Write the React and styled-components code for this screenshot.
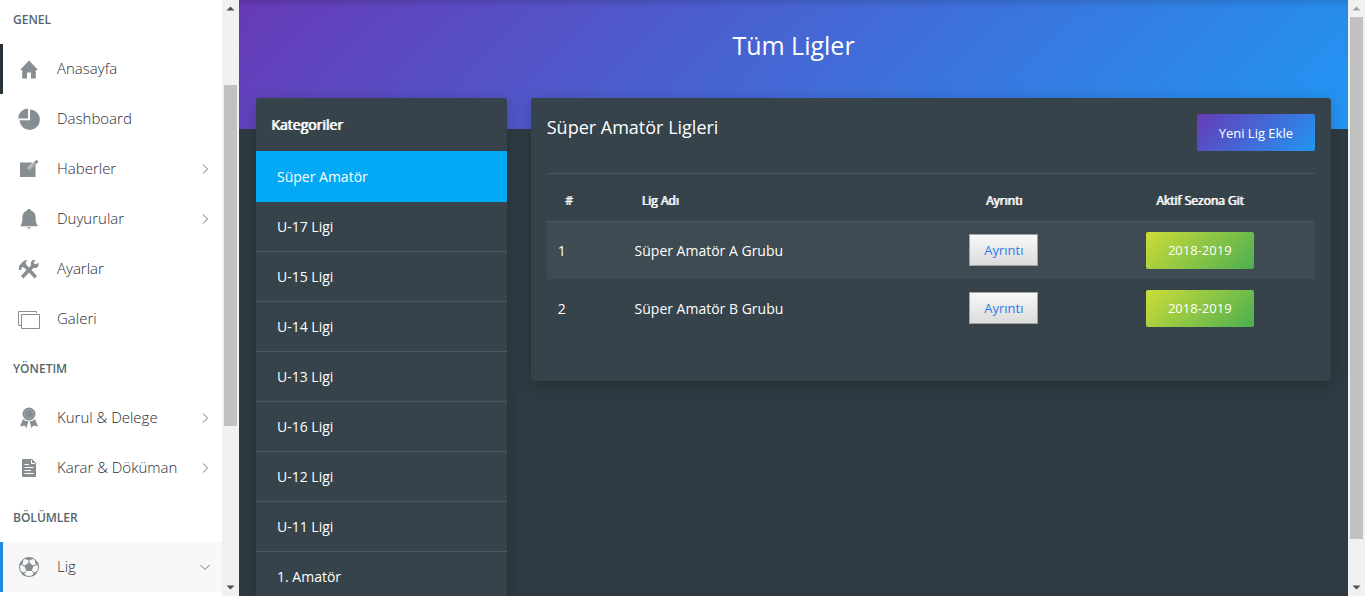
import styled, { createGlobalStyle } from 'styled-components';

const GlobalStyle = createGlobalStyle`
  * {
    box-sizing: border-box;
  }
  body {
    margin: 0;
    font-family: 'Open Sans', 'Noto Sans', sans-serif;
    font-size: 14px;
    color: #fff;
  }
`

const Page = styled.div`
  display: flex;
  height: 100vh;
  overflow: hidden;
`

const Sidebar = styled.nav`
  flex: 0 0 222px;
  overflow: hidden;
  background: #fff;
`

const Group = styled.section`
  &:first-child {
    margin-top: -5px;
  }
`

const GroupTitle = styled.h2`
  margin: 0;
  padding: 0 13px;
  font-size: 12px;
  font-weight: 600;
  line-height: 49px;
  color: #54666f;
`

const NavLink = styled.a`
  display: flex;
  align-items: center;
  height: 50px;
  padding: 0 12px 0 15px;
  border-left: 3px solid ${props => props.$bar || 'transparent'};
  background: ${props => (props.$open ? '#f8f8f8' : 'transparent')};
  color: #1f2d33;
  font-size: 15px;
  font-weight: 300;
  text-decoration: none;

  span {
    flex: 1;
    padding: 0 0 2px 17px;
  }
`

const NavIcon = styled.svg`
  width: 22px;
  height: 22px;
  fill: #868e92;
`

const Arrow = styled.svg`
  width: 10px;
  height: 10px;
  fill: none;
  stroke: #6b787e;
  transform: rotate(${props => (props.$open ? '90deg' : '0deg')});
`

const Scrollbar = styled.div`
  display: flex;
  flex: 0 0 17px;
  flex-direction: column;
  align-items: center;
  background: #f1f1f1;
`

const ScrollArrow = styled.svg`
  flex: 0 0 17px;
  width: 17px;
  fill: ${props => (props.$off ? '#a3a3a3' : '#505050')};
`

const Space = styled.div`
  flex: ${props => props.$size} 0 0;
`

const Thumb = styled(Space)`
  width: 13px;
  background: #c1c1c1;
`

const Main = styled.main`
  flex: 1;
  min-width: 0;
  overflow: hidden;
  padding: 0 17px;
  background: linear-gradient(135deg, #673ab7, #2196f3) top / 100% 129px no-repeat, #2f3b43;
  box-shadow: inset 0 6px 8px -5px rgba(0, 0, 0, 0.2);
`

const PageTitle = styled.h1`
  margin: 0;
  padding: 28px 0 36px;
  font-size: 25px;
  font-weight: 400;
  line-height: 34px;
  text-align: center;
`

const Columns = styled.div`
  display: grid;
  grid-template-columns: repeat(12, 1fr);
  align-items: start;
  gap: 24px;
`

const Card = styled.section`
  grid-column: span ${props => props.$span};
  border-radius: 3px;
  background: #36434b;
  box-shadow: 0 4px 16px rgba(0, 0, 0, 0.22);
`

const CardTitle = styled.h3`
  margin: 0;
  padding: 0 15px;
  font-size: 14px;
  font-weight: 400;
  line-height: 53px;
  text-shadow: 1px 0 currentColor;
`

const Category = styled.a`
  display: block;
  padding: 0 21px;
  border-bottom: 1px solid #4b575e;
  line-height: 49px;
  color: #fff;
  text-decoration: none;

  &[aria-current] {
    border-top: 1px solid #03a9f4;
    border-color: #03a9f4;
    background: #03a9f4;
  }
`

const Leagues = styled(Card)`
  padding: 16px 16px 44px;
`

const LeaguesHead = styled.header`
  display: flex;
  justify-content: space-between;
  align-items: flex-start;
  height: 60px;
  border-bottom: 1px solid #48555c;

  h2 {
    margin: 0;
    font-size: 18px;
    font-weight: 400;
    line-height: 27px;
  }
`

const Button = styled.button`
  height: 37px;
  padding: 0 22px;
  border: 0;
  border-radius: 2px;
  background: linear-gradient(135deg, ${props => props.$from}, ${props => props.$to});
  color: #fff;
  font: inherit;
  font-size: 13px;
  font-weight: 500;
`

const DetailButton = styled.button`
  height: 32px;
  padding: 0 14px;
  border: 1px solid #a3a3a3;
  background: linear-gradient(#f8f8f8, #dcdcdc);
  color: #2a7bea;
  font: inherit;
  font-size: 13px;
  vertical-align: middle;
`

const Table = styled.table`
  width: 100%;
  table-layout: fixed;
  border-collapse: collapse;

  th {
    height: 47px;
    padding: 6px 18px 0;
    border-bottom: 1px solid #4b575e;
    font-size: 12px;
    font-weight: 400;
    text-align: left;
    text-shadow: 1px 0 currentColor;
  }
  td {
    height: 58px;
    padding: 0 11px;
  }
  tbody tr:nth-child(odd) {
    background: #3e4b52;
  }
  th:nth-child(n + 3),
  td:nth-child(n + 3) {
    text-align: center;
  }
`

const icons = {
  home: <path d="M11 2.500 L20 12 H17.800 V20.500 H13 V14.500 H9 V20.500 H4.200 V12 H2 Z" />,
  pie: (
    <>
      <path d="M10 0.500 V10.500 H0.200 A10 10 0 0 1 10 0.500 Z" />
      <path d="M12 1.500 A10.200 10.200 0 1 1 1.500 12.300 H12 Z" />
    </>
  ),
  edit: (
    <>
      <path d="M2 4.500 H17.500 V19 H2 Z" />
      <path fill="none" stroke="#fff" strokeWidth="3.600" d="M20 1.500 L10.500 11.500" />
      <path d="M18.500 1.800 L20.500 3.800 L11.500 13 L8 14.500 L9.300 11 Z" />
      <path fill="none" stroke="#fff" strokeWidth="0.800" d="M17.500 4.800 L11 11.300" />
    </>
  ),
  bell: (
    <path d="M11 1 C12 1 12.800 1.600 12.900 2.600 C16 3.500 17.600 6 17.600 9.500 C17.600 13.500 18.200 15.500 19.500 17.500 V18.200 H2.500 V17.500 C3.800 15.500 4.400 13.500 4.400 9.500 C4.400 6 6 3.500 9.100 2.600 C9.200 1.600 10 1 11 1 Z M9 19.300 H13 A2.100 2.100 0 0 1 9 19.300 Z" />
  ),
  tools: (
    <path d="M1 12 L1 8 L4.500 4 Q7 1.500 9.500 2.500 L7.500 4.500 L8.500 7 L11 9.500 L13 7.500 Q12 3.500 15 2 L17.500 2 L15.500 4.500 L17 6.500 L20.500 5 Q21 9 18 10 L15.500 10 L13.500 12 L19 18 L16.500 20.500 L11 14.500 L5.500 20.500 L3 18 L8.500 12 L6 9.500 L4 9 L3 12 Z" />
  ),
  gallery: <path fill="none" stroke="#868e92" d="M18.500 5 V3.500 H0.500 V17.500 H3 M3.500 6.500 H21.500 V20.500 H3.500 Z" />,
  award: (
    <>
      <circle cx="11" cy="7" r="6.500" />
      <circle cx="11" cy="7" r="4.500" fill="none" stroke="#b0b5b8" strokeWidth="0.700" />
      <path d="M5 12 Q8 15 10.500 14 L8.500 21 L6.500 18.500 L2 19.500 Z M17 12 Q14 15 11.500 14 L13.500 21 L15.500 18.500 L20 19.500 Z" />
    </>
  ),
  document: (
    <>
      <path d="M4 2 H14 L18 6 V20 H4 Z" />
      <path fill="none" stroke="#fff" d="M13.500 3 V6.500 H17 M6.500 7.500 H11 M6.500 10.500 H15.500 M6.500 13.500 H13 M6.500 16.500 H15.500" />
    </>
  ),
  ball: (
    <>
      <circle cx="11" cy="11" r="9.500" fill="none" stroke="#868e92" />
      <path d="M11 6.500 L15.500 9.800 L13.800 15 H8.200 L6.500 9.800 Z M6 2.500 L11 4.500 L16 2.500 L11 1 Z M1.200 10 L4.300 8.500 L5.500 3.500 L2.500 6 Z M20.800 10 L17.700 8.500 L16.500 3.500 L19.500 6 Z M2.500 15 L6 16.500 L8.500 20.500 L4.500 19 Z M19.500 15 L16 16.500 L13.500 20.500 L17.500 19 Z" />
      <path fill="none" stroke="#868e92" d="M11 7 V4 M15 10 L18 9 M13.500 14.500 L16 17 M8.500 14.500 L6 17 M7 10 L4 9" />
    </>
  ),
};

const menu = [
  {
    title: 'GENEL',
    items: [
      { label: 'Anasayfa', icon: 'home', bar: '#263238' },
      { label: 'Dashboard', icon: 'pie' },
      { label: 'Haberler', icon: 'edit', sub: true },
      { label: 'Duyurular', icon: 'bell', sub: true },
      { label: 'Ayarlar', icon: 'tools' },
      { label: 'Galeri', icon: 'gallery' },
    ],
  },
  {
    title: 'YÖNETIM',
    items: [
      { label: 'Kurul & Delege', icon: 'award', sub: true },
      { label: 'Karar & Döküman', icon: 'document', sub: true },
    ],
  },
  {
    title: 'BÖLÜMLER',
    items: [{ label: 'Lig', icon: 'ball', sub: true, open: true, bar: '#1e88e5' }],
  },
];

const categories = [
  'Süper Amatör', 'U-17 Ligi', 'U-15 Ligi', 'U-14 Ligi', 'U-13 Ligi',
  'U-16 Ligi', 'U-12 Ligi', 'U-11 Ligi', '1. Amatör',
];

const leagues = [
  { id: 1, name: 'Süper Amatör A Grubu', season: '2018-2019' },
  { id: 2, name: 'Süper Amatör B Grubu', season: '2018-2019' },
];

function ScrollRail({ before, size, after, atTop }) {
  return (
    <Scrollbar aria-hidden="true">
      <ScrollArrow viewBox="0 0 17 17" $off={atTop}><path d="M4.500 10.500 L8.500 6.500 L12.500 10.500 Z" /></ScrollArrow>
      <Space $size={before} />
      <Thumb $size={size} />
      <Space $size={after} />
      <ScrollArrow viewBox="0 0 17 17"><path d="M4.500 6.500 L8.500 10.500 L12.500 6.500 Z" /></ScrollArrow>
    </Scrollbar>
  );
}

function App() {
  return (
    <Page>
      <GlobalStyle />
      <Sidebar>
        {menu.map(group => (
          <Group key={group.title}>
            <GroupTitle>{group.title}</GroupTitle>
            {group.items.map(item => (
              <NavLink key={item.label} href="#" $bar={item.bar} $open={item.open}>
                <NavIcon viewBox="0 0 22 22">{icons[item.icon]}</NavIcon>
                <span>{item.label}</span>
                {item.sub && <Arrow viewBox="0 0 10 10" $open={item.open}><path d="M3 0.500 L7.500 5 L3 9.500" /></Arrow>}
              </NavLink>
            ))}
          </Group>
        ))}
      </Sidebar>
      <ScrollRail before={68} size={341} after={153} />
      <Main>
        <PageTitle>Tüm Ligler</PageTitle>
        <Columns>
          <Card $span={3}>
            <CardTitle>Kategoriler</CardTitle>
            {categories.map((name, i) => (
              <Category key={name} href="#" aria-current={i === 0 ? 'page' : undefined}>{name}</Category>
            ))}
          </Card>
          <Leagues $span={9}>
            <LeaguesHead>
              <h2>Süper Amatör Ligleri</h2>
              <Button $from="#673ab7" $to="#2196f3">Yeni Lig Ekle</Button>
            </LeaguesHead>
            <Table>
              <colgroup>
                <col width="10%" />
                <col width="39%" />
                <col width="21%" />
                <col width="30%" />
              </colgroup>
              <thead>
                <tr>
                  <th>#</th>
                  <th>Lig Adı</th>
                  <th>Ayrıntı</th>
                  <th>Aktif Sezona Git</th>
                </tr>
              </thead>
              <tbody>
                {leagues.map(league => (
                  <tr key={league.id}>
                    <td>{league.id}</td>
                    <td>{league.name}</td>
                    <td><DetailButton>Ayrıntı</DetailButton></td>
                    <td><Button $from="#cddc39" $to="#4caf50">{league.season}</Button></td>
                  </tr>
                ))}
              </tbody>
            </Table>
          </Leagues>
        </Columns>
      </Main>
      <ScrollRail before={0} size={522} after={40} atTop />
    </Page>
  );
}

export default App;
